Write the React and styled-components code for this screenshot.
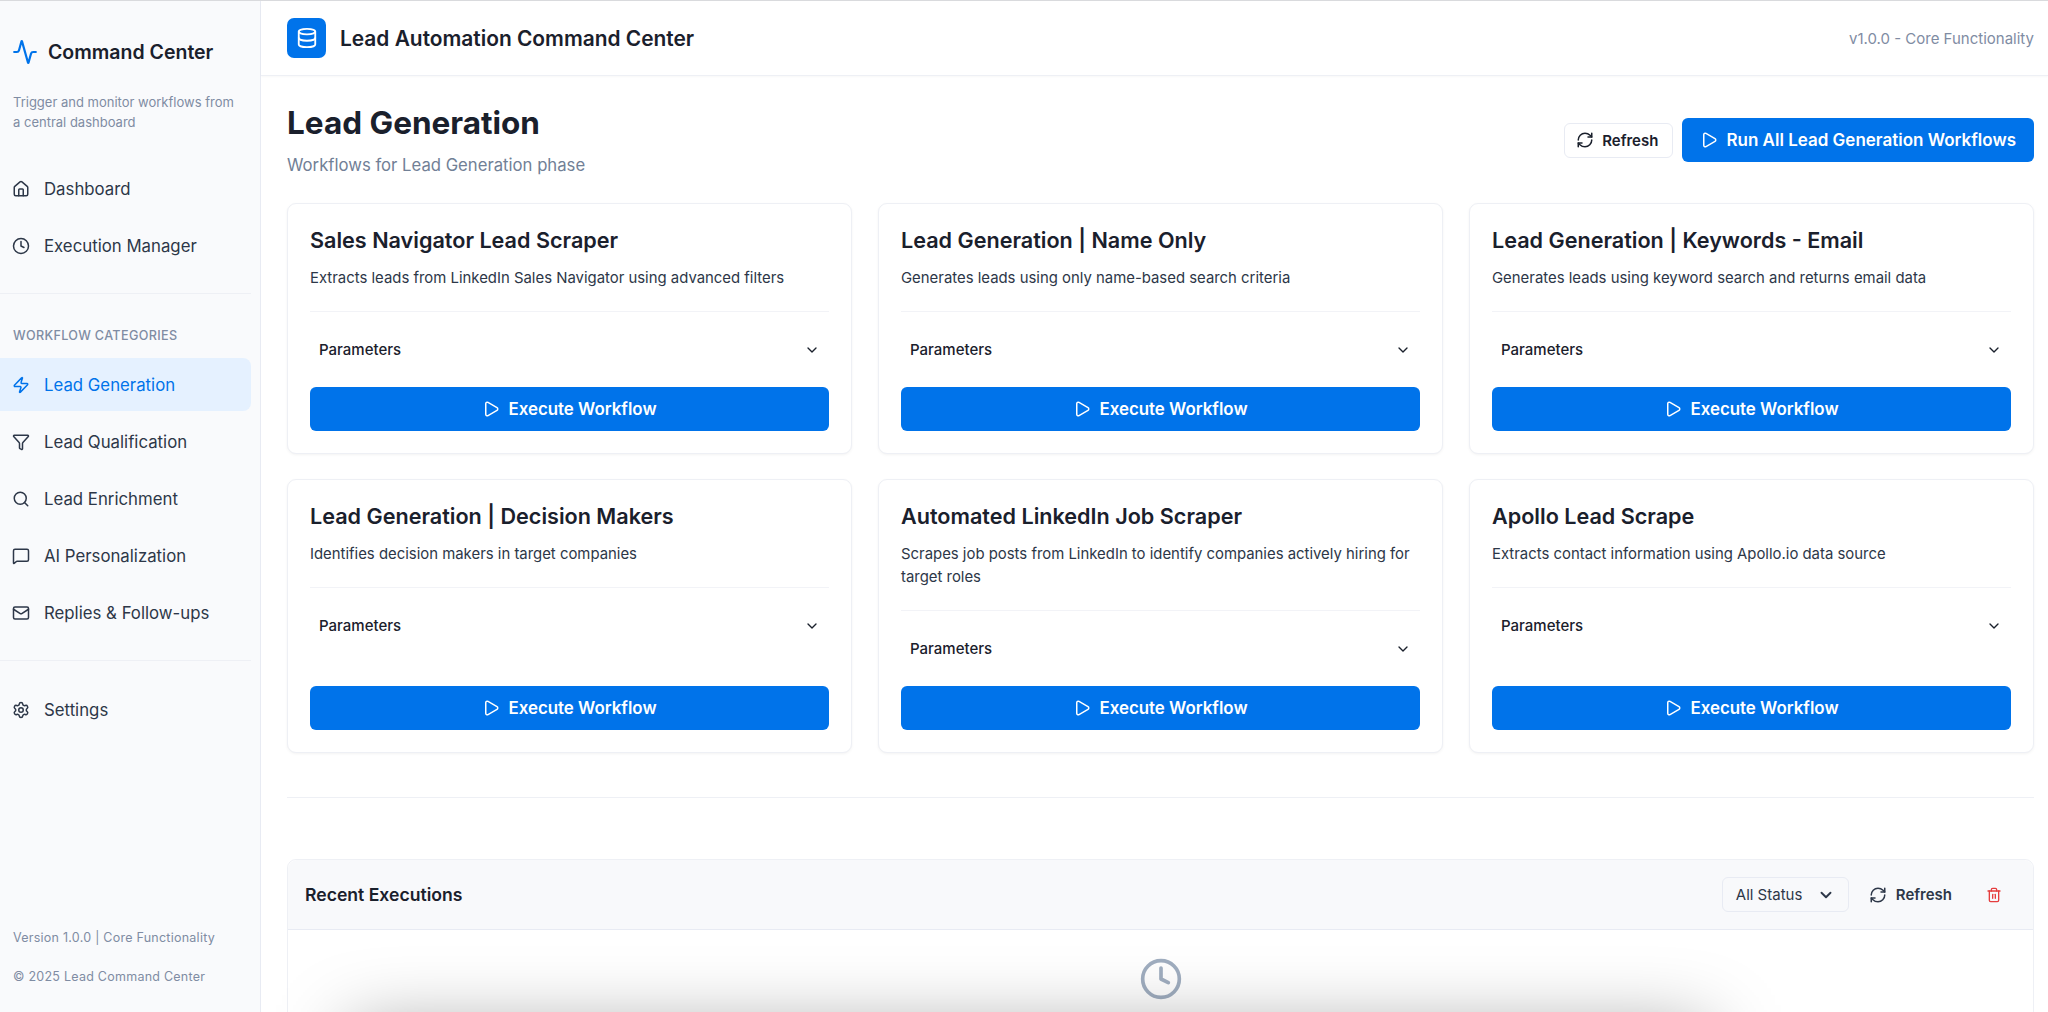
import React from 'react';
import styled, { createGlobalStyle } from 'styled-components';
import {
  Activity, Home, Clock, Zap, Filter, Search, MessageSquare, Mail, Settings,
  Database, RefreshCw, Play, ChevronDown, Trash2,
} from 'lucide-react';

const GlobalStyle = createGlobalStyle`
  html, body {
    margin: 0;
    height: 100%;
    overflow: hidden;
    background: #fff;
  }
  * { box-sizing: border-box; }
  body {
    font-family: Inter, "Liberation Sans", sans-serif;
    color: #1a202c;
  }
`;

const Shell = styled.div`
  display: flex;
  height: 1012px;
  border-top: 1px solid #d9dadd;
  overflow: hidden;
`;

const Sidebar = styled.aside`
  flex: 0 0 261px;
  display: flex;
  flex-direction: column;
  background: #f9fafc;
  border-right: 1px solid #e8ebf3;
  padding: 0 9px 0 0;
`;

const Brand = styled.div`
  display: flex;
  align-items: center;
  gap: 10px;
  padding: 35px 0 0 12px;
  height: 67px;
  font-size: 19.5px;
  line-height: 30px;
  font-weight: 600;
  color: #1a202c;
  svg { color: #0073ea; }
`;

const Tagline = styled.p`
  margin: 24px 0 0;
  padding: 0 8px 0 13px;
  font-size: 13px;
  line-height: 20px;
  color: #7f8ca3;
`;

const NavGroup = styled.nav`
  display: flex;
  flex-direction: column;
  gap: 4px;
  margin-top: ${(props) => props.$top || 0}px;
`;

const NavItem = styled.div`
  display: flex;
  align-items: center;
  gap: 14px;
  height: 53px;
  padding-left: 12px;
  border-radius: 0 8px 8px 0;
  font-size: 16.8px;
  color: ${(props) => (props.$active ? '#0073ea' : '#2d3748')};
  background: ${(props) => (props.$active ? '#e5f1ff' : 'transparent')};
`;

const Rule = styled.hr`
  margin: 21px 0 0;
  border: 0;
  border-top: 1px solid #eef0f5;
`;

const SectionLabel = styled.div`
  margin: 34px 0 14px;
  padding-left: 13px;
  font-size: 12.6px;
  line-height: 16px;
  font-weight: 500;
  letter-spacing: 0.35px;
  color: #7f8ca3;
`;

const SideFooter = styled.div`
  margin-top: auto;
  padding: 0 0 25px 13px;
  font-size: 12.5px;
  line-height: 20px;
  letter-spacing: 0.25px;
  color: #7f8ca3;
  display: flex;
  flex-direction: column;
  gap: 19px;
`;

const Main = styled.main`
  flex: 1;
  display: flex;
  flex-direction: column;
  min-width: 0;
`;

const TopBar = styled.header`
  flex: 0 0 75px;
  display: flex;
  align-items: center;
  padding: 0 14px 0 26px;
  border-bottom: 1px solid #eef0f5;
  box-shadow: 0 1px 2px rgba(0, 0, 0, 0.03);
`;

const AppBadge = styled.div`
  width: 39px;
  height: 40px;
  margin-top: -1px;
  border-radius: 7px;
  background: #0073ea;
  color: #fff;
  display: flex;
  align-items: center;
  justify-content: center;
`;

const AppTitle = styled.h1`
  margin: 0 0 0 14px;
  font-size: 20.9px;
  font-weight: 600;
  color: #1a202c;
`;

const VersionTag = styled.span`
  margin-left: auto;
  font-size: 15px;
  color: #7f8ca3;
`;

const Content = styled.div`
  flex: 1;
  padding: 27px 14px 0 26px;
  overflow: hidden;
`;

const PageHead = styled.div`
  display: flex;
  justify-content: space-between;
  align-items: flex-start;
  height: 100px;
`;

const PageTitle = styled.h2`
  margin: 0;
  font-size: 31.5px;
  line-height: 40px;
  font-weight: 700;
  color: #1a202c;
`;

const PageSub = styled.p`
  margin: 10px 0 0;
  font-size: 16.7px;
  line-height: 24px;
  color: #718096;
`;

const PageActions = styled.div`
  display: flex;
  align-items: center;
  gap: 9px;
  margin-top: 15px;
`;

const GhostButton = styled.button`
  display: flex;
  align-items: center;
  gap: 8px;
  height: 35px;
  padding: 0 14px 0 11px;
  background: #fff;
  border: 1px solid #e8ebf3;
  border-radius: 6px;
  font: 600 15px Inter, sans-serif;
  color: #1a202c;
`;

const PrimaryButton = styled.button`
  display: flex;
  align-items: center;
  justify-content: center;
  gap: 8px;
  height: 44px;
  width: ${(props) => (props.$wide ? 'auto' : '100%')};
  padding: 0 18px;
  background: #0073ea;
  border: 0;
  border-radius: 6px;
  font: 600 ${(props) => (props.$wide ? '17px' : '16.9px')} Inter, sans-serif;
  color: #fff;
`;

const CardGrid = styled.div`
  display: grid;
  grid-template-columns: repeat(3, 1fr);
  gap: 25px 26px;
`;

const Card = styled.section`
  display: flex;
  flex-direction: column;
  padding: 22px;
  background: #fff;
  border: 1px solid #eef0f5;
  border-radius: 9px;
  box-shadow: 0 1px 3px rgba(0, 0, 0, 0.05);
`;

const CardTitle = styled.h3`
  margin: 0;
  font-size: 21.6px;
  line-height: 28px;
  font-weight: 600;
  color: #1a202c;
`;

const CardText = styled.p`
  margin: 13px 0 0;
  font-size: 14.9px;
  line-height: 23px;
  color: #2d3748;
`;

const ParamRow = styled.div`
  display: flex;
  align-items: center;
  justify-content: space-between;
  height: 76px;
  margin-top: 21px;
  margin-bottom: ${(props) => (props.$stretch ? 'auto' : '0')};
  padding: 0 9px;
  border-top: 1px solid #f2f3f7;
  font-size: 15px;
  font-weight: 500;
  color: #1a202c;
`;

const SectionRule = styled.hr`
  margin: 44px 0 0;
  border: 0;
  border-top: 1px solid #eef0f5;
`;

const Panel = styled.section`
  position: relative;
  height: 400px;
  margin-top: 61px;
  border: 1px solid #eef0f5;
  border-radius: 9px;
`;

const PanelHead = styled.div`
  display: flex;
  align-items: center;
  height: 70px;
  padding: 0 17px;
  background: #f8f9fb;
  border-bottom: 1px solid #e8ebf3;
  border-radius: 9px 9px 0 0;
`;

const PanelTitle = styled.h4`
  margin: 0;
  font-size: 17.6px;
  font-weight: 600;
  color: #1a202c;
`;

const PanelActions = styled.div`
  display: flex;
  align-items: center;
  margin-left: auto;
`;

const StatusSelect = styled.div`
  display: flex;
  align-items: center;
  justify-content: space-between;
  width: 127px;
  height: 35px;
  padding: 0 13px;
  border: 1px solid #e8ebf3;
  border-radius: 6px;
  font-size: 15px;
  color: #2d3748;
`;

const PlainButton = styled.div`
  display: flex;
  align-items: center;
  gap: 9px;
  margin-left: 20px;
  font-size: 15px;
  font-weight: 600;
  color: #2d3748;
`;

const TrashButton = styled.div`
  display: flex;
  margin: 0 14px 0 34px;
  color: #e53e3e;
`;

const EmptyState = styled.div`
  display: flex;
  justify-content: center;
  padding-top: 27px;
  color: #a0aec0;
`;

// soft shadow of something below the fold, centred on the window rather than the panel
const BlurShadow = styled.div`
  position: absolute;
  left: 62px;
  right: 326px;
  top: 170px;
  height: 220px;
  background: rgba(0, 0, 0, 0.38);
  filter: blur(38px);
`;

const navTop = [
  { label: 'Dashboard', Icon: Home },
  { label: 'Execution Manager', Icon: Clock },
];

const navCategories = [
  { label: 'Lead Generation', Icon: Zap, active: true },
  { label: 'Lead Qualification', Icon: Filter },
  { label: 'Lead Enrichment', Icon: Search },
  { label: 'AI Personalization', Icon: MessageSquare },
  { label: 'Replies & Follow-ups', Icon: Mail },
];

const workflows = [
  { title: 'Sales Navigator Lead Scraper', text: 'Extracts leads from LinkedIn Sales Navigator using advanced filters' },
  { title: 'Lead Generation | Name Only', text: 'Generates leads using only name-based search criteria' },
  { title: 'Lead Generation | Keywords - Email', text: 'Generates leads using keyword search and returns email data' },
  { title: 'Lead Generation | Decision Makers', text: 'Identifies decision makers in target companies', stretch: true },
  { title: 'Automated LinkedIn Job Scraper', text: 'Scrapes job posts from LinkedIn to identify companies actively hiring for target roles' },
  { title: 'Apollo Lead Scrape', text: 'Extracts contact information using Apollo.io data source', stretch: true },
];

const NavLink = ({ label, Icon, active }) => (
  <NavItem $active={active}>
    <Icon size={18} />
    {label}
  </NavItem>
);

export default function App() {
  return (
    <>
      <GlobalStyle />
      <Shell>
        <Sidebar>
          <Brand>
            <Activity size={26} />
            Command Center
          </Brand>
          <Tagline>Trigger and monitor workflows from a central dashboard</Tagline>
          <NavGroup $top={30}>
            {navTop.map((item) => <NavLink key={item.label} {...item} />)}
          </NavGroup>
          <Rule />
          <SectionLabel>WORKFLOW CATEGORIES</SectionLabel>
          <NavGroup>
            {navCategories.map((item) => <NavLink key={item.label} {...item} />)}
          </NavGroup>
          <Rule />
          <NavGroup $top={22}>
            <NavLink label="Settings" Icon={Settings} />
          </NavGroup>
          <SideFooter>
            <span>Version 1.0.0 | Core Functionality</span>
            <span>© 2025 Lead Command Center</span>
          </SideFooter>
        </Sidebar>
        <Main>
          <TopBar>
            <AppBadge><Database size={22} /></AppBadge>
            <AppTitle>Lead Automation Command Center</AppTitle>
            <VersionTag>v1.0.0 - Core Functionality</VersionTag>
          </TopBar>
          <Content>
            <PageHead>
              <div>
                <PageTitle>Lead Generation</PageTitle>
                <PageSub>Workflows for Lead Generation phase</PageSub>
              </div>
              <PageActions>
                <GhostButton><RefreshCw size={18} />Refresh</GhostButton>
                <PrimaryButton $wide><Play size={18} />Run All Lead Generation Workflows</PrimaryButton>
              </PageActions>
            </PageHead>
            <CardGrid>
              {workflows.map((flow) => (
                <Card key={flow.title}>
                  <CardTitle>{flow.title}</CardTitle>
                  <CardText>{flow.text}</CardText>
                  <ParamRow $stretch={flow.stretch}>
                    Parameters
                    <ChevronDown size={16} />
                  </ParamRow>
                  <PrimaryButton><Play size={18} />Execute Workflow</PrimaryButton>
                </Card>
              ))}
            </CardGrid>
            <SectionRule />
            <Panel>
              <PanelHead>
                <PanelTitle>Recent Executions</PanelTitle>
                <PanelActions>
                  <StatusSelect>All Status<ChevronDown size={18} strokeWidth={2.5} /></StatusSelect>
                  <PlainButton><RefreshCw size={18} />Refresh</PlainButton>
                  <TrashButton><Trash2 size={16} /></TrashButton>
                </PanelActions>
              </PanelHead>
              <EmptyState><Clock size={44} /></EmptyState>
              <BlurShadow />
            </Panel>
          </Content>
        </Main>
      </Shell>
    </>
  );
}
